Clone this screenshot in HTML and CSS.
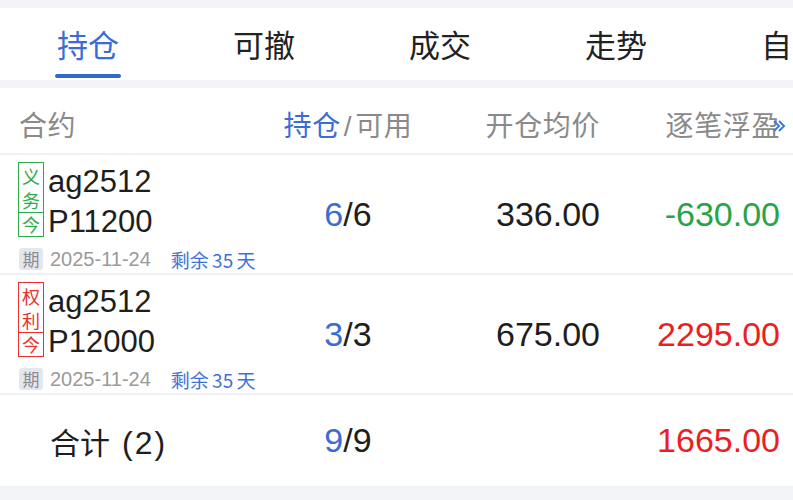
FILE: index.html
```html
<!DOCTYPE html>
<html lang="zh">
<head>
<meta charset="utf-8">
<link rel="stylesheet" href="styles.css">
</head>
<body>
<div class="top-gap"></div>
<nav class="tabs">
  <div class="tab active">持仓</div>
  <div class="tab">可撤</div>
  <div class="tab">成交</div>
  <div class="tab">走势</div>
  <div class="tab">自选</div>
</nav>
<div class="gap"></div>
<section class="table">
  <div class="row head">
    <div class="c1">合约</div>
    <div class="c2"><span class="blue">持仓</span><span class="slash">/</span>可用</div>
    <div class="c3">开仓均价</div>
    <div class="c4">逐笔浮盈<svg class="more" viewBox="0 0 16 16" width="16" height="16"><polyline points="3,3 8,8 3,13" /><polyline points="8,3 13,8 8,13" /></svg></div>
  </div>

  <div class="row item">
    <div class="c1 contract">
      <div class="top">
        <div class="tag green"><div class="tag-top"><span>义</span><span>务</span></div><div class="tag-bot">今</div></div>
        <div class="name"><div>ag2512</div><div>P11200</div></div>
      </div>
      <div class="expire"><span class="qi">期</span><span class="date">2025-11-24</span><span class="left">剩余 35 天</span></div>
    </div>
    <div class="c2 num"><span class="blue">6</span>/6</div>
    <div class="c3 num">336.00</div>
    <div class="c4 num green-t">-630.00</div>
  </div>

  <div class="row item">
    <div class="c1 contract">
      <div class="top">
        <div class="tag red"><div class="tag-top"><span>权</span><span>利</span></div><div class="tag-bot">今</div></div>
        <div class="name"><div>ag2512</div><div>P12000</div></div>
      </div>
      <div class="expire"><span class="qi">期</span><span class="date">2025-11-24</span><span class="left">剩余 35 天</span></div>
    </div>
    <div class="c2 num"><span class="blue">3</span>/3</div>
    <div class="c3 num">675.00</div>
    <div class="c4 num red-t">2295.00</div>
  </div>

  <div class="row total">
    <div class="c1 sum">合计<span class="cnt">(2)</span></div>
    <div class="c2 num"><span class="blue">9</span>/9</div>
    <div class="c3 num"></div>
    <div class="c4 num red-t">1665.00</div>
  </div>
</section>
</body>
</html>
```

FILE: styles.css
```css
* { box-sizing: border-box; }
html, body {
  margin: 0;
  padding: 0;
  background: #f3f4f7;
  font-family: "Liberation Sans", "Noto Sans CJK SC", sans-serif;
  color: #222;
  overflow: hidden;
}
.top-gap { height: 8px; }
.gap { height: 8px; }

.tabs {
  display: flex;
  height: 72px;
  background: #fff;
  overflow: hidden;
}
.tab {
  flex: 0 0 176px;
  display: flex;
  align-items: center;
  justify-content: center;
  padding-bottom: 2px;
  font-family: "Noto Sans CJK SC", sans-serif;
  font-size: 31px;
  color: #222;
  position: relative;
}
.tab.active { color: #3b6cd4; }
.tab.active::after {
  content: "";
  position: absolute;
  left: 55px;
  width: 66px;
  top: 66px;
  height: 4px;
  border-radius: 2px;
  background: #3466d2;
}

.table { background: #fff; }
.row {
  display: grid;
  grid-template-columns: 260px 176px 164px 1fr;
  padding-right: 13px;
  align-items: center;
}
.row + .row { border-top: 2px solid #eef0f3; }
.head {
  height: 65px;
  padding-top: 7px;
  font-family: "Noto Sans CJK SC", sans-serif;
  font-size: 28px;
  letter-spacing: 0.6px;
  color: #8a8a8a;
}
.head .c1 { padding-left: 19px; }
.c2 { text-align: center; }
.c3, .c4 { text-align: right; }
.head .c4 { position: relative; }
.more {
  position: absolute;
  right: -7px;
  top: 50%;
  margin-top: -6px;
  fill: none;
  stroke: #3b7be0;
  stroke-width: 2;
}
.head .slash { margin: 0 3px; font-family: "Liberation Sans", sans-serif; }
.blue { color: #3b6cd4; }

.item { height: 120px; }
.contract {
  align-self: start;
  padding: 7px 0 0 18px;
}
.contract .top { display: flex; gap: 4px; }
.tag {
  width: 26px;
  height: 75px;
  border: 1.5px solid;
  display: flex;
  flex-direction: column;
  font-family: "Noto Sans CJK SC", sans-serif;
  font-size: 18px;
  text-align: center;
}
.tag-top {
  height: 49px;
  display: flex;
  flex-direction: column;
  justify-content: center;
}
.tag-top span { display: block; height: 24px; line-height: 24px; }
.tag-bot { flex: 1; border-top: 1.5px solid; line-height: 22px; }
.tag.green { color: #2eab4c; border-color: #2eab4c; }
.tag.red { color: #e8312f; border-color: #e8312f; }
.name {
  font-size: 31px;
  line-height: 40px;
  color: #1e1e1e;
}
.expire {
  display: flex;
  align-items: center;
  margin-top: 6px;
  height: 22px;
}
.qi {
  width: 24px;
  height: 22px;
  border-radius: 3px;
  background: #e5e7ee;
  color: #8a8c94;
  font-family: "Noto Sans CJK SC", sans-serif;
  font-size: 17px;
  line-height: 22px;
  text-align: center;
  margin-left: 1px;
}
.date {
  font-size: 20px;
  color: #9a9a9a;
  margin-left: 7px;
}
.left {
  font-family: "Noto Sans CJK SC", sans-serif;
  font-size: 19px;
  color: #3f72d6;
  margin-left: 20px;
  word-spacing: -1px;
}
.num { font-size: 34px; color: #1e1e1e; }
.green-t { color: #25a545; }
.red-t { color: #ea1f1f; }

.total { height: 93px; }
.sum {
  padding-left: 50px;
  font-family: "Noto Sans CJK SC", sans-serif;
  font-size: 30px;
  color: #1e1e1e;
}
.cnt {
  font-family: "Liberation Sans", sans-serif;
  font-size: 32px;
  margin-left: 12px;
  letter-spacing: 2px;
}
```
